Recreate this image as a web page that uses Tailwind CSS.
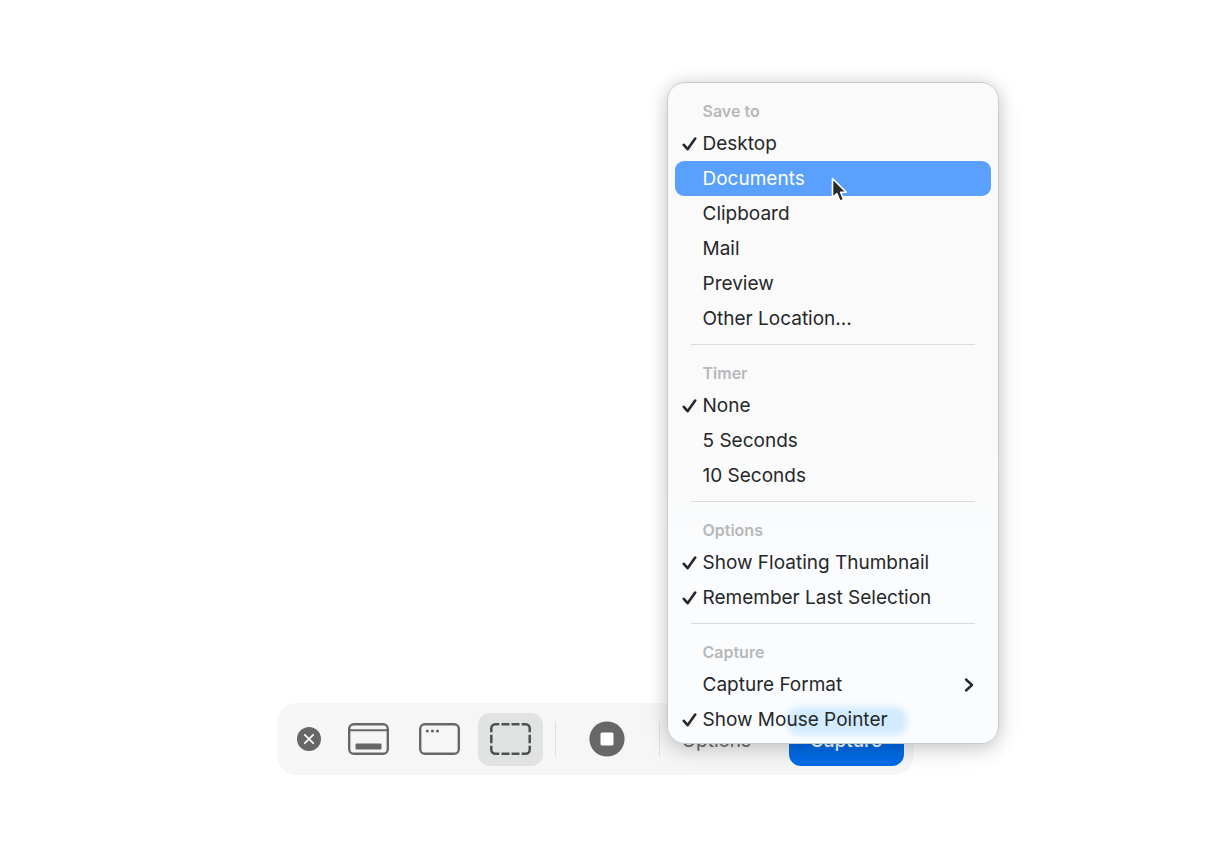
<!DOCTYPE html>
<html lang="en">
<head>
<meta charset="utf-8">
<meta name="viewport" content="width=device-width, initial-scale=1">
<title>Screenshot toolbar</title>
<script src="https://cdn.jsdelivr.net/npm/@tailwindcss/browser@4"></script>
</head>
<body class="bg-white font-['Inter','Liberation_Sans',sans-serif] text-[19px] leading-6 text-[#262829]">
<svg class="hidden" aria-hidden="true">
  <symbol id="check" viewBox="0 0 16 16"><path d="M1.800 8.800 5.600 13.200 13.200 2.600" fill="none" stroke="currentColor" stroke-width="2.600" stroke-linecap="round" stroke-linejoin="round"/></symbol>
</svg>
<main class="flex min-h-screen items-end justify-center pr-[26px] pb-[72px]">
  <div role="toolbar" aria-label="Screenshot" class="flex h-[72px] items-center rounded-[20px] bg-[#f6f6f6] pr-[10px] pl-5 text-[#666867]">
    <button aria-label="Close" class="mr-[15px] size-6">
      <svg class="size-6" viewBox="0 0 24 24"><circle cx="12" cy="12" r="12" fill="currentColor"/><path d="M7.8 7.8l8.4 8.4M16.2 7.8l-8.4 8.4" stroke="#f8f8f8" stroke-width="1.8" stroke-linecap="round"/></svg>
    </button>
    <div class="flex gap-[6px]">
      <button aria-label="Capture entire screen" class="flex h-[53px] w-[65px] items-center justify-center rounded-xl">
        <svg class="h-8 w-[41px]" viewBox="0 0 41 32" fill="none" stroke="currentColor"><rect x="1.200" y="1.200" width="38.600" height="29.600" rx="4.600" stroke-width="2.400"/><path d="M2 7.200h37" stroke-width="2"/><rect x="7.500" y="20.500" width="26" height="6" rx="1" fill="currentColor" stroke="none"/></svg>
      </button>
      <button aria-label="Capture selected window" class="flex h-[53px] w-[65px] items-center justify-center rounded-xl">
        <svg class="h-8 w-[41px]" viewBox="0 0 41 32" fill="none" stroke="currentColor"><rect x="1.200" y="1.200" width="38.600" height="29.600" rx="4.600" stroke-width="2.400"/><g fill="currentColor" stroke="none"><circle cx="8.300" cy="8" r="1.600"/><circle cx="13.400" cy="8" r="1.600"/><circle cx="18.500" cy="8" r="1.600"/></g></svg>
      </button>
      <button aria-label="Capture selected portion" aria-pressed="true" class="flex h-[53px] w-[65px] items-center justify-center rounded-xl bg-[#e1e2e2] text-[#4e5152]">
        <svg class="h-8 w-[41px]" viewBox="0 0 41 32" fill="none" stroke="currentColor" stroke-width="2.500"><path d="M1.300 9.300V5.300a4 4 0 0 1 4-4h4M31.700 1.300h4a4 4 0 0 1 4 4v4M39.700 22.700v4a4 4 0 0 1-4 4h-4M9.300 30.700h-4a4 4 0 0 1-4-4v-4M11.500 1.300h8M21.500 1.300h8M11.500 30.700h8M21.500 30.700h8M1.300 11.700v8.600M39.700 11.700v8.600"/></svg>
      </button>
    </div>
    <div class="ml-3 h-[34px] w-px bg-[#dedfdf]"></div>
    <button aria-label="Record" class="mr-[34px] ml-[33px] size-9">
      <svg class="size-9" viewBox="0 0 36 36"><circle cx="18" cy="18" r="17.600" fill="currentColor"/><rect x="11.500" y="11.500" width="13" height="13" rx="1.500" fill="#fff"/></svg>
    </button>
    <div class="h-[34px] w-px bg-[#dedfdf]"></div>
    <div class="relative w-[129px]">
      <button aria-haspopup="menu" aria-expanded="true" class="block pt-1 pl-[22px]">Options</button>

      <div role="menu" aria-label="Options" class="absolute bottom-[9px] left-[7px] w-[332px] rounded-[18px] border border-[#c4cbcf] bg-linear-to-b from-[#fafafa] from-55% to-[#fafcfe] to-75% px-[7px] pt-2 pb-[6px] text-[#262829] shadow-[0_6px_22px_rgba(0,0,0,0.16),0_0_16px_rgba(0,0,0,0.1)]">
        <div class="absolute bottom-[8px] left-[119px] h-7 w-[120px] rounded-xl bg-[#d2ebff] blur-[3px]"></div>

        <div role="group" aria-labelledby="save" class="relative">
          <h2 id="save" class="flex h-[35px] items-center pt-1 pl-7 text-base font-semibold text-[#b6b8ba]">Save to</h2>
          <button role="menuitemradio" aria-checked="true" class="flex h-[35px] w-full items-center pt-px pl-[7px]"><svg class="mr-[5px] size-4"><use href="#check"/></svg>Desktop</button>
          <button role="menuitemradio" aria-checked="false" class="relative flex h-[35px] w-full items-center rounded-[9px] bg-[#5aa0fe] pt-px pl-7 text-white">Documents
            <svg class="absolute top-[15px] left-[155px] h-[30px] w-5" viewBox="0 0 20 30" aria-hidden="true"><path d="M2.500 2.500V21.600L6.900 17.700L10 25.200L13.700 23.600L10.600 16.300H16.300Z" fill="#282a2c" stroke="#fff" stroke-width="1.600" stroke-linejoin="round"/></svg>
          </button>
          <button role="menuitemradio" aria-checked="false" class="flex h-[35px] w-full items-center pt-px pl-7">Clipboard</button>
          <button role="menuitemradio" aria-checked="false" class="flex h-[35px] w-full items-center pt-px pl-7">Mail</button>
          <button role="menuitemradio" aria-checked="false" class="flex h-[35px] w-full items-center pt-px pl-7">Preview</button>
          <button role="menuitemradio" aria-checked="false" class="flex h-[35px] w-full items-center pt-px pl-7">Other Location...</button>
        </div>
        <hr class="relative mx-4 my-2 border-[#d9dbdd]">
        <div role="group" aria-labelledby="timer" class="relative">
          <h2 id="timer" class="flex h-[35px] items-center pt-1 pl-7 text-base font-semibold text-[#b6b8ba]">Timer</h2>
          <button role="menuitemradio" aria-checked="true" class="flex h-[35px] w-full items-center pt-px pl-[7px]"><svg class="mr-[5px] size-4"><use href="#check"/></svg>None</button>
          <button role="menuitemradio" aria-checked="false" class="flex h-[35px] w-full items-center pt-px pl-7">5 Seconds</button>
          <button role="menuitemradio" aria-checked="false" class="flex h-[35px] w-full items-center pt-px pl-7">10 Seconds</button>
        </div>
        <hr class="relative mx-4 my-2 border-[#d9dbdd]">
        <div role="group" aria-labelledby="opts" class="relative">
          <h2 id="opts" class="flex h-[35px] items-center pt-1 pl-7 text-base font-semibold text-[#b6b8ba]">Options</h2>
          <button role="menuitemcheckbox" aria-checked="true" class="flex h-[35px] w-full items-center pt-px pl-[7px]"><svg class="mr-[5px] size-4"><use href="#check"/></svg>Show Floating Thumbnail</button>
          <button role="menuitemcheckbox" aria-checked="true" class="flex h-[35px] w-full items-center pt-px pl-[7px]"><svg class="mr-[5px] size-4"><use href="#check"/></svg>Remember Last Selection</button>
        </div>
        <hr class="relative mx-4 my-2 border-[#d9dbdd]">
        <div role="group" aria-labelledby="capt" class="relative">
          <h2 id="capt" class="flex h-[35px] items-center pt-1 pl-7 text-base font-semibold text-[#b6b8ba]">Capture</h2>
          <button role="menuitem" aria-haspopup="menu" class="flex h-[35px] w-full items-center justify-between pt-px pr-4 pl-7">Capture Format
            <svg class="h-4 w-3" viewBox="0 0 12 16"><path d="M3 2.500 9 8 3 13.500" fill="none" stroke="currentColor" stroke-width="2.400" stroke-linecap="round" stroke-linejoin="round"/></svg>
          </button>
          <button role="menuitemcheckbox" aria-checked="true" class="flex h-[35px] w-full items-center pt-px pl-[7px]"><svg class="mr-[5px] size-4"><use href="#check"/></svg>Show Mouse Pointer</button>
        </div>
      </div>
    </div>
    <button class="h-[53px] w-[115px] rounded-xl bg-[#006be6] pt-1 font-medium text-white">Capture</button>
  </div>
</main>
</body>
</html>
